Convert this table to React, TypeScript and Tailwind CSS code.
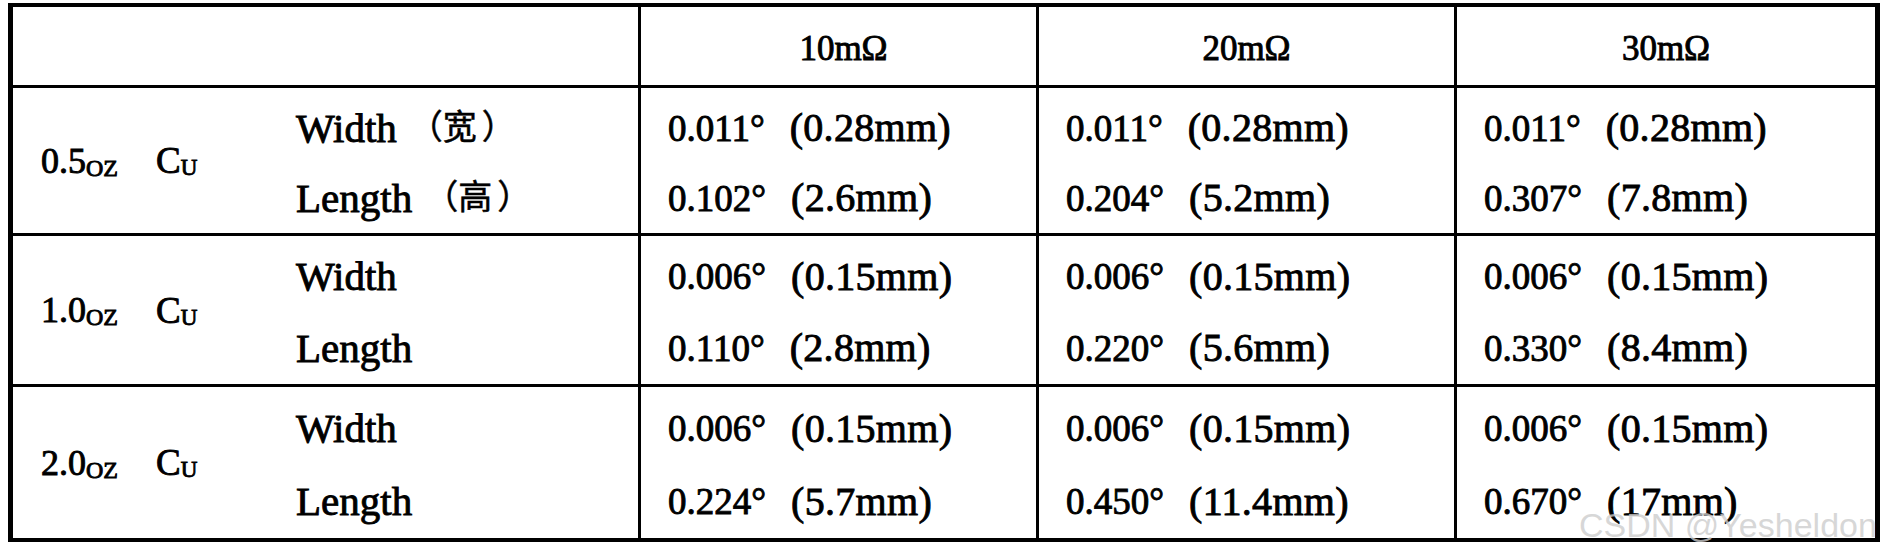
import React from 'react';

// --- DATOS DE LA TABLA ---
const columns = ['10mΩ', '20mΩ', '30mΩ'];

const groups = [
  {
    oz: '0.5',
    h: 'h-[148px]',
    rows: [
      { name: 'Width', cn: '宽', vals: [['0.011°', '(0.28mm)'], ['0.011°', '(0.28mm)'], ['0.011°', '(0.28mm)']] },
      { name: 'Length', cn: '高', vals: [['0.102°', '(2.6mm)'], ['0.204°', '(5.2mm)'], ['0.307°', '(7.8mm)']] },
    ],
  },
  {
    oz: '1.0',
    h: 'h-[151px]',
    rows: [
      { name: 'Width', cn: '', vals: [['0.006°', '(0.15mm)'], ['0.006°', '(0.15mm)'], ['0.006°', '(0.15mm)']] },
      { name: 'Length', cn: '', vals: [['0.110°', '(2.8mm)'], ['0.220°', '(5.6mm)'], ['0.330°', '(8.4mm)']] },
    ],
  },
  {
    oz: '2.0',
    h: 'h-[154px]',
    rows: [
      { name: 'Width', cn: '', vals: [['0.006°', '(0.15mm)'], ['0.006°', '(0.15mm)'], ['0.006°', '(0.15mm)']] },
      { name: 'Length', cn: '', vals: [['0.224°', '(5.7mm)'], ['0.450°', '(11.4mm)'], ['0.670°', '(17mm)']] },
    ],
  },
];

// anchos de las columnas de datos (incluye el borde izquierdo de 3px)
const colW = ['w-[398px]', 'w-[418px]', 'w-[421px]'];

const Value = ({ v }: { v: string[] }) => (
  <div className="flex flex-1 items-center">
    <span className="text-[37px]">{v[0]}</span>
    <span className="ml-[25px] text-[40px] tracking-[0.3px]">{v[1]}</span>
  </div>
);

function App() {
  return (
    <div className="min-h-screen bg-white">
      <div className="relative pt-[3px] pl-[8px]">
        <div className="w-[1872px] border-x-[5px] border-y-[4px] border-black text-black text-[38px] leading-none font-['Liberation_Serif','Noto_Sans_CJK_SC',serif] [-webkit-text-stroke:0.9px_#000]">
          {/* cabecera */}
          <div className="flex h-[78px] text-[35px]">
            <div className="w-[625px]" />
            {columns.map((c, i) => (
              <div
                key={c}
                className={`${colW[i]} border-l-[3px] border-black flex items-center justify-center pt-[4px] ${i === 0 ? 'pl-[10px]' : ''}`}
              >
                {c}
              </div>
            ))}
          </div>

          {/* filas */}
          {groups.map((g) => (
            <div key={g.oz} className={`flex ${g.h} border-t-[3px] border-black`}>
              <div className="w-[625px] flex">
                <div className="w-[283px] pl-[28px] flex items-center">
                  <span className="text-[36px]">{g.oz}</span>
                  <span className="uppercase text-[24px] relative top-[7px]">oz</span>
                  <span className="ml-[38px] text-[37px]">C</span>
                  <span className="uppercase text-[23px] relative top-[7px]">u</span>
                </div>
                <div className="flex flex-col flex-1 pt-[5px] text-[41px]">
                  {g.rows.map((r) => (
                    <div key={r.name} className="flex flex-1 items-center">
                      {r.name}
                      {r.cn && (
                        <span className="flex items-center text-[34px] [-webkit-text-stroke:0.5px_#000] [font-feature-settings:'halt']">
                          <span className="ml-[29px]">（</span>
                          <span>{r.cn}</span>
                          <span className="ml-[5px]">）</span>
                        </span>
                      )}
                    </div>
                  ))}
                </div>
              </div>
              {columns.map((c, ci) => (
                <div key={c} className={`${colW[ci]} border-l-[3px] border-black flex flex-col pl-[27px] pt-[5px]`}>
                  {g.rows.map((r) => (
                    <Value key={r.name} v={r.vals[ci]} />
                  ))}
                </div>
              ))}
            </div>
          ))}
        </div>

        {/* marca de agua */}
        <div className="absolute left-[1579px] top-[508px] text-[34px] leading-none text-[rgba(205,205,205,0.8)] font-['Liberation_Sans',sans-serif] whitespace-nowrap">
          CSDN @Yesheldon
        </div>
      </div>
    </div>
  );
}

export default App;
